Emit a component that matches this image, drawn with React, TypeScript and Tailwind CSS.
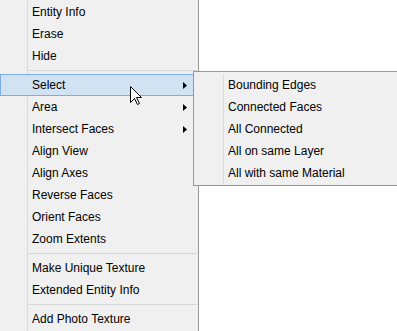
type Entry = { label: string; sub?: boolean; active?: boolean } | "sep";

const mainItems: Entry[] = [
  { label: "Entity Info" },
  { label: "Erase" },
  { label: "Hide" },
  "sep",
  { label: "Select", sub: true, active: true },
  { label: "Area", sub: true },
  { label: "Intersect Faces", sub: true },
  { label: "Align View" },
  { label: "Align Axes" },
  { label: "Reverse Faces" },
  { label: "Orient Faces" },
  { label: "Zoom Extents" },
  "sep",
  { label: "Make Unique Texture" },
  { label: "Extended Entity Info" },
  "sep",
  { label: "Add Photo Texture" },
];

const selectItems = [
  "Bounding Edges",
  "Connected Faces",
  "All Connected",
  "All on same Layer",
  "All with same Material",
];

// gutter line drawn behind the rows, 27px from the row start
const gutter =
  "bg-[linear-gradient(to_right,transparent_27px,#dadada_27px,#dadada_28px,transparent_28px)]";

function Arrow() {
  return (
    <svg width="4" height="7" viewBox="0 0 4 7" className="shrink-0">
      <polygon points="0,0 4,3.5 0,7" fill="#000" />
    </svg>
  );
}

function Row({ label, sub, active }: { label: string; sub?: boolean; active?: boolean }) {
  return (
    <div
      className={`flex h-[22px] w-[194px] items-center justify-between ${
        active
          ? "border border-[#78aee5] bg-[#d1e2f2] pl-[31px] pr-[6px]"
          : "pl-[32px] pr-[7px]"
      }`}
    >
      <span>{label}</span>
      {sub && <Arrow />}
    </div>
  );
}

function Cursor() {
  return (
    <svg width="12" height="19" viewBox="0 0 12 19" className="absolute left-[130px] top-[86px]">
      <polygon
        points="0.5,0.5 0.5,16.5 4.5,12.5 7.5,18.5 9.5,17.5 6.5,11.5 11.5,11.5"
        fill="#fff"
        stroke="#000"
        strokeWidth="1"
        strokeLinejoin="miter"
      />
    </svg>
  );
}

export default function App() {
  return (
    <div
      className="relative h-[331px] w-[397px] overflow-hidden bg-white text-[12px] leading-[22px] text-black"
      style={{ fontFamily: '"Liberation Sans", Arial, sans-serif' }}
    >
      {/* Context menu */}
      <div className="h-full w-[199px] border-r border-[#979797] bg-[#f0f0f0] pt-[1px]">
        <div className={`h-full ${gutter}`}>
          {mainItems.map((item, i) =>
            item === "sep" ? (
              <div key={i} className="py-[3px] pl-[28px] pr-[1px]">
                <div className="h-px bg-[#d7d7d7]" />
              </div>
            ) : (
              <Row key={i} {...item} />
            )
          )}
        </div>
      </div>

      {/* Select submenu */}
      <div className="absolute left-[193px] top-[71px] w-[230px] border border-[#979797] bg-[#f0f0f0] pb-[1px] pl-[2px] pt-[2px]">
        <div className={gutter}>
          {selectItems.map((label) => (
            <div key={label} className="flex h-[22px] items-center pl-[32px]">
              {label}
            </div>
          ))}
        </div>
      </div>

      <Cursor />
    </div>
  );
}
